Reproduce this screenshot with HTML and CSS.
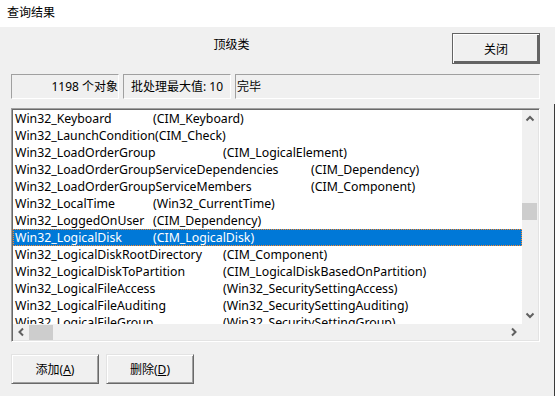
FILE: index.html
```html
<!DOCTYPE html>
<html lang="zh-CN">
<head>
    <meta charset="UTF-8">
    <title>查询结果</title>
    <link rel="stylesheet" href="styles.css">
</head>
<body>
    <div class="window">
        <div class="titlebar">查询结果</div>
        <div class="dialog">
            <div class="top-row">
                <div class="caption">顶级类</div>
                <button class="btn btn-default">关闭</button>
            </div>
            <div class="status-bar">
                <div class="field field-count">1198 个对象</div>
                <div class="field field-batch">批处理最大值: 10</div>
                <div class="field field-state">完毕</div>
            </div>
            <div class="listbox">
                <div class="list-area">
                    <div class="rows">
                        <div class="row"><span class="name tab-a">Win32_Keyboard</span>(CIM_Keyboard)</div>
                        <div class="row"><span class="name tab-a">Win32_LaunchCondition</span>(CIM_Check)</div>
                        <div class="row"><span class="name tab-b">Win32_LoadOrderGroup</span>(CIM_LogicalElement)</div>
                        <div class="row"><span class="name tab-c">Win32_LoadOrderGroupServiceDependencies</span>(CIM_Dependency)</div>
                        <div class="row"><span class="name tab-c">Win32_LoadOrderGroupServiceMembers</span>(CIM_Component)</div>
                        <div class="row"><span class="name tab-a">Win32_LocalTime</span>(Win32_CurrentTime)</div>
                        <div class="row"><span class="name tab-a">Win32_LoggedOnUser</span>(CIM_Dependency)</div>
                        <div class="row selected"><span class="name tab-a">Win32_LogicalDisk</span>(CIM_LogicalDisk)</div>
                        <div class="row"><span class="name tab-b">Win32_LogicalDiskRootDirectory</span>(CIM_Component)</div>
                        <div class="row"><span class="name tab-b">Win32_LogicalDiskToPartition</span>(CIM_LogicalDiskBasedOnPartition)</div>
                        <div class="row"><span class="name tab-b">Win32_LogicalFileAccess</span>(Win32_SecuritySettingAccess)</div>
                        <div class="row"><span class="name tab-b">Win32_LogicalFileAuditing</span>(Win32_SecuritySettingAuditing)</div>
                        <div class="row"><span class="name tab-b">Win32_LogicalFileGroup</span>(Win32_SecuritySettingGroup)</div>
                    </div>
                    <div class="vscroll">
                        <svg class="arrow" width="16" height="16" viewBox="0 0 16 16"><path d="M4.5 10.5 L8 7 L11.5 10.5" fill="none" stroke="#606060" stroke-width="2"/></svg>
                        <div class="vtrack"><div class="vthumb"></div></div>
                        <svg class="arrow" width="16" height="16" viewBox="0 0 16 16"><path d="M4.5 5.5 L8 9 L11.5 5.5" fill="none" stroke="#606060" stroke-width="2"/></svg>
                    </div>
                </div>
                <div class="hscroll">
                    <svg class="arrow" width="16" height="16" viewBox="0 0 16 16"><path d="M10 4.5 L6.5 8 L10 11.5" fill="none" stroke="#606060" stroke-width="2"/></svg>
                    <div class="hthumb"></div>
                    <div class="htrack"></div>
                    <svg class="arrow" width="16" height="16" viewBox="0 0 16 16"><path d="M6 4.5 L9.5 8 L6 11.5" fill="none" stroke="#606060" stroke-width="2"/></svg>
                    <div class="corner"></div>
                </div>
            </div>
            <div class="bottom-row">
                <button class="btn">添加(<u>A</u>)</button>
                <button class="btn">删除(<u>D</u>)</button>
            </div>
        </div>
    </div>
</body>
</html>
```

FILE: styles.css
```css
body {
    margin: 0;
    font-family: 'Noto Sans', 'Noto Sans CJK SC', sans-serif;
    font-size: 12px;
    color: #000;
    background-color: #f0f0f0;
}
.window {
    position: relative;
    width: 555px;
    height: 396px;
    overflow: hidden;
    box-sizing: border-box;
}
/* edge of the window behind, showing at the right */
.window::after {
    content: '';
    position: absolute;
    right: 0;
    top: 104px;
    bottom: 0;
    width: 1px;
    background: #3a3a3a;
}
.titlebar {
    height: 27px;
    line-height: 25px;
    padding-left: 7px;
    background: #fff;
}
.dialog {
    padding: 0 15px 0 11px;
}
.top-row {
    display: flex;
    align-items: flex-start;
    padding-top: 6px;
}
.caption {
    flex: 1;
    text-align: center;
    padding-top: 4px;
    line-height: 16px;
}
.btn {
    font-family: inherit;
    font-size: 12px;
    color: #000;
    width: 88px;
    height: 30px;
    padding: 0;
    background: #f0f0f0;
    border: 1px solid;
    border-color: #e3e3e3 #696969 #696969 #e3e3e3;
    box-shadow: inset 1px 1px 0 #fff, inset -1px -1px 0 #a0a0a0;
}
.btn-default {
    width: 88px;
    height: 31px;
    border: 1px solid #646464;
    box-shadow: inset 1px 1px 0 #fff, inset -2px -2px 0 #646464;
}
.status-bar {
    display: flex;
    gap: 4px;
    margin-top: 10px;
    height: 25px;
}
.field {
    box-sizing: border-box;
    border: 1px solid;
    border-color: #a0a0a0 #fff #fff #a0a0a0;
    line-height: 23px;
    white-space: nowrap;
}
.field-count {
    width: 108px;
    text-align: right;
}
.field-batch {
    width: 108px;
    text-align: center;
}
.field-state {
    flex: 1;
    padding-left: 1px;
}
.listbox {
    margin-top: 9px;
    height: 234px;
    box-sizing: border-box;
    border: 1px solid;
    border-color: #a0a0a0 #fff #fff #a0a0a0;
    box-shadow: inset 1px 1px 0 #696969, inset -1px -1px 0 #e3e3e3;
    padding: 1px;
    background: #fff;
    display: flex;
    flex-direction: column;
}
.list-area {
    display: flex;
    height: 214px;
}
.rows {
    flex: 1;
    overflow: hidden;
    background: #fff;
    font-size: 12.3px;
}
.row {
    height: 17px;
    line-height: 17px;
    padding-left: 2px;
    white-space: nowrap;
}
.row.selected {
    background: #0078d7;
    color: #fff;
    outline: 1px dotted #ff8a28;
    outline-offset: -1px;
}
.name {
    display: inline-block;
}
.tab-a {
    min-width: 138px;
}
.tab-b {
    min-width: 208px;
}
.tab-c {
    min-width: 296px;
}
.vscroll {
    width: 16px;
    background: #f0f0f0;
    display: flex;
    flex-direction: column;
}
.arrow {
    display: block;
    flex: none;
}
.vtrack {
    flex: 1;
    padding-top: 77px;
}
.vthumb {
    width: 15px;
    height: 17px;
    background: #cdcdcd;
}
.hscroll {
    height: 16px;
    background: #f0f0f0;
    display: flex;
    align-items: center;
}
.hthumb {
    width: 24px;
    height: 15px;
    background: #cdcdcd;
}
.htrack {
    flex: 1;
}
.corner {
    width: 16px;
    height: 16px;
}
.bottom-row {
    display: flex;
    gap: 7px;
    margin-top: 12px;
}
```
